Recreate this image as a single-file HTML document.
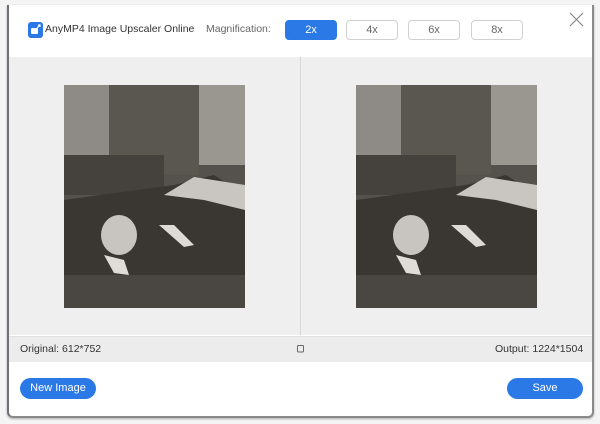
<!DOCTYPE html>
<html><head><meta charset="utf-8"><style>
*{margin:0;padding:0;box-sizing:border-box}
body{width:600px;height:424px;background:#f4f4f4;position:relative;overflow:hidden;font-family:"Liberation Sans",sans-serif}
.dlg{position:absolute;left:7px;top:5px;width:587px;height:413px;background:#fff;border-left:2px solid #6f6f7a;border-right:2px solid #8a8a8a;border-bottom:2px solid #8a8a8a;border-radius:0 0 6px 6px;box-shadow:0 1px 2px rgba(0,0,0,.3)}
.logo{position:absolute;left:19px;top:17px;width:15px;height:16px;background:#2a79e6;border-radius:3px}
.t{position:absolute;font-size:10.5px;color:#333;white-space:nowrap}
.btn{position:absolute;top:15px;width:52px;height:20px;border:1px solid #d0d0d0;border-radius:4px;font-size:11px;color:#666;text-align:center;line-height:18px;background:#fff}
.btn.on{background:#2a79e6;border-color:#2a79e6;color:#fff}
.gray{position:absolute;left:0;top:52px;width:583px;height:278px;background:#efefef}
.div{position:absolute;left:291px;top:52px;width:1px;height:278px;background:#d8d8d8}
.bar{position:absolute;left:0;top:331px;width:583px;height:26px;background:#ececec;border-top:1px solid #e0e0e0}
.pill{position:absolute;top:373px;height:21px;border-radius:11px;background:#2a79e6;color:#fff;font-size:11px;text-align:center;line-height:21px}
.ph{position:absolute;top:80px;width:181px;height:223px}
</style></head><body>
<div class="dlg">
<div class="logo"><svg width="15" height="16"><rect x="3" y="6" width="7" height="6" fill="#fff" rx="1"/><path d="M9 6 L12 3 M10 3 H12 V5" stroke="#fff" stroke-width="1.2" fill="none"/></svg></div>
<div class="t" style="left:36px;top:18px">AnyMP4 Image Upscaler Online</div>
<div class="t" style="left:197px;top:18px;color:#666">Magnification:</div>
<div class="btn on" style="left:276px">2x</div>
<div class="btn" style="left:337px">4x</div>
<div class="btn" style="left:399px">6x</div>
<div class="btn" style="left:462px">8x</div>
<svg style="position:absolute;left:560px;top:7px" width="15" height="15"><path d="M1 1 L14 14 M14 1 L1 14" stroke="#888" stroke-width="1.2"/></svg>
<div class="gray"></div><div class="div"></div>
<svg class="ph" style="left:55px" viewBox="0 0 181 223"><rect width="181" height="223" fill="#55514c"/><rect x="0" y="0" width="45" height="70" fill="#8e8a85"/><rect x="45" y="0" width="90" height="90" fill="#5a5650"/><rect x="135" y="0" width="46" height="80" fill="#9a9690"/><rect x="0" y="70" width="100" height="40" fill="#45413c"/><polygon points="0,115 110,100 150,90 181,110 181,223 0,223" fill="#3a3632"/><polygon points="100,110 130,92 181,100 181,125 140,115" fill="#c9c6c1"/><ellipse cx="55" cy="150" rx="18" ry="20" fill="#c8c4bf"/><polygon points="40,170 60,175 65,190 50,188" fill="#e0ddd8"/><polygon points="95,140 110,140 130,160 120,162" fill="#dedad5"/><rect x="0" y="190" width="181" height="33" fill="#4a4641"/></svg>
<svg class="ph" style="left:347px" viewBox="0 0 181 223"><rect width="181" height="223" fill="#55514c"/><rect x="0" y="0" width="45" height="70" fill="#8e8a85"/><rect x="45" y="0" width="90" height="90" fill="#5a5650"/><rect x="135" y="0" width="46" height="80" fill="#9a9690"/><rect x="0" y="70" width="100" height="40" fill="#45413c"/><polygon points="0,115 110,100 150,90 181,110 181,223 0,223" fill="#3a3632"/><polygon points="100,110 130,92 181,100 181,125 140,115" fill="#c9c6c1"/><ellipse cx="55" cy="150" rx="18" ry="20" fill="#c8c4bf"/><polygon points="40,170 60,175 65,190 50,188" fill="#e0ddd8"/><polygon points="95,140 110,140 130,160 120,162" fill="#dedad5"/><rect x="0" y="190" width="181" height="33" fill="#4a4641"/></svg>
<div class="bar"></div>
<div class="t" style="left:11px;top:338px">Original: 612*752</div>
<svg style="position:absolute;left:288px;top:339px" width="8" height="9"><rect x="0.5" y="1.5" width="6" height="6.5" fill="none" stroke="#666" rx="1"/></svg>
<div class="t" style="left:486px;top:338px">Output: 1224*1504</div>
<div class="pill" style="left:11px;width:76px">New Image</div>
<div class="pill" style="left:498px;width:76px">Save</div>
</div>
</body></html>
